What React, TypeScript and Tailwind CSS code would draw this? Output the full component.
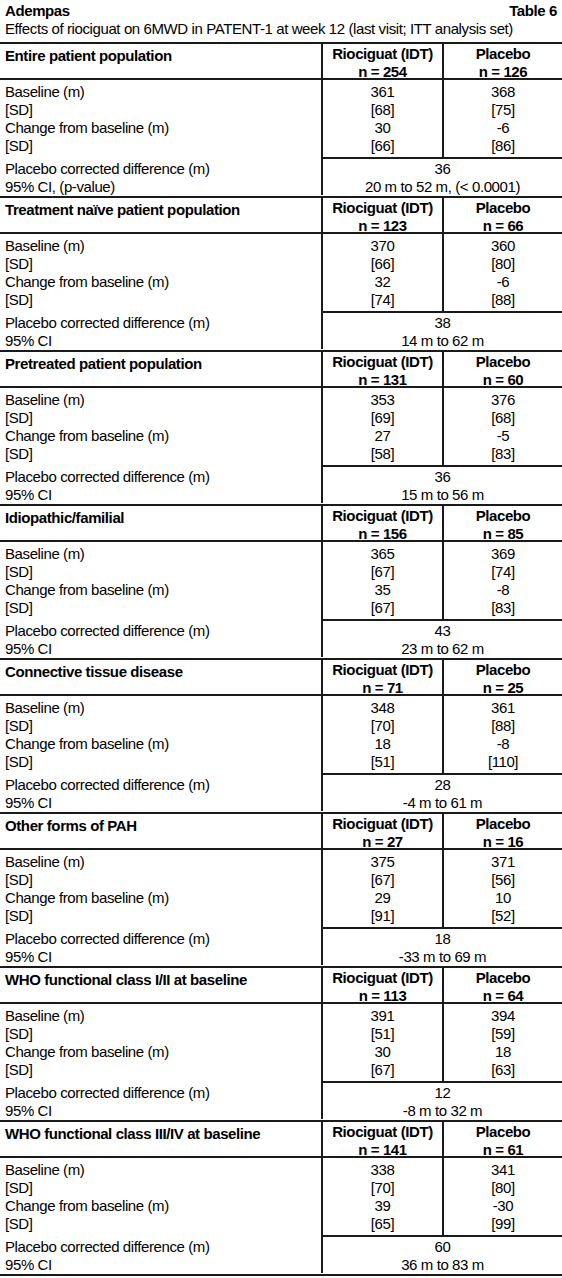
import React from "react";

type Sec = {
  title: string;
  n1: string;
  n2: string;
  b: [string, string, string, string];
  c: [string, string, string, string];
  diff: string;
  ci: string;
  ciLabel: string;
};

const sections: Sec[] = [
  { title: "Entire patient population", n1: "254", n2: "126", b: ["361", "[68]", "368", "[75]"], c: ["30", "[66]", "-6", "[86]"], diff: "36", ci: "20 m to 52 m, (< 0.0001)", ciLabel: "95% CI, (p-value)" },
  { title: "Treatment naïve patient population", n1: "123", n2: "66", b: ["370", "[66]", "360", "[80]"], c: ["32", "[74]", "-6", "[88]"], diff: "38", ci: "14 m to 62 m", ciLabel: "95% CI" },
  { title: "Pretreated patient population", n1: "131", n2: "60", b: ["353", "[69]", "376", "[68]"], c: ["27", "[58]", "-5", "[83]"], diff: "36", ci: "15 m to 56 m", ciLabel: "95% CI" },
  { title: "Idiopathic/familial", n1: "156", n2: "85", b: ["365", "[67]", "369", "[74]"], c: ["35", "[67]", "-8", "[83]"], diff: "43", ci: "23 m to 62 m", ciLabel: "95% CI" },
  { title: "Connective tissue disease", n1: "71", n2: "25", b: ["348", "[70]", "361", "[88]"], c: ["18", "[51]", "-8", "[110]"], diff: "28", ci: "-4 m to 61 m", ciLabel: "95% CI" },
  { title: "Other forms of PAH", n1: "27", n2: "16", b: ["375", "[67]", "371", "[56]"], c: ["29", "[91]", "10", "[52]"], diff: "18", ci: "-33 m to 69 m", ciLabel: "95% CI" },
  { title: "WHO functional class I/II at baseline", n1: "113", n2: "64", b: ["391", "[51]", "394", "[59]"], c: ["30", "[67]", "18", "[63]"], diff: "12", ci: "-8 m to 32 m", ciLabel: "95% CI" },
  { title: "WHO functional class III/IV at baseline", n1: "141", n2: "61", b: ["338", "[70]", "341", "[80]"], c: ["39", "[65]", "-30", "[99]"], diff: "60", ci: "36 m to 83 m", ciLabel: "95% CI" },
];

function Section({ s }: { s: Sec }) {
  return (
    <div className="border-t-2 border-[#1a1a1a]">
      {/* header row */}
      <div className="flex border-b-2 border-[#1a1a1a] h-[36px]">
        <div className="w-[321px] pl-[5px] pt-[3px] font-bold">{s.title}</div>
        <div className="w-[121px] border-l-2 border-[#1a1a1a] text-center font-bold pt-[1px]">
          <div>Riociguat (IDT)</div>
          <div>n = {s.n1}</div>
        </div>
        <div className="flex-1 border-l-2 border-[#1a1a1a] text-center font-bold pt-[1px]">
          <div>Placebo</div>
          <div>n = {s.n2}</div>
        </div>
      </div>
      {/* data row */}
      <div className="flex h-[77px]">
        <div className="w-[321px] pl-[5px] pt-[3px]">
          <div>Baseline (m)</div>
          <div>[SD]</div>
          <div>Change from baseline (m)</div>
          <div>[SD]</div>
        </div>
        <div className="w-[121px] border-l-2 border-[#1a1a1a] text-center pt-[3px]">
          <div>{s.b[0]}</div>
          <div>{s.b[1]}</div>
          <div>{s.c[0]}</div>
          <div>{s.c[1]}</div>
        </div>
        <div className="flex-1 border-l-2 border-[#1a1a1a] text-center pt-[3px]">
          <div>{s.b[2]}</div>
          <div>{s.b[3]}</div>
          <div>{s.c[2]}</div>
          <div>{s.c[3]}</div>
        </div>
      </div>
      {/* placebo corrected row */}
      <div className="flex">
        <div className="w-[321px] pl-[5px] pt-[3px]">
          <div>Placebo corrected difference (m)</div>
          <div>{s.ciLabel}</div>
        </div>
        <div className="flex-1 border-l-2 border-t-2 border-[#1a1a1a] text-center h-[38px] pt-[1px]">
          <div>{s.diff}</div>
          <div>{s.ci}</div>
        </div>
      </div>
    </div>
  );
}

export default function App() {
  return (
    <div
      className="w-[562px] bg-white text-black text-[15px] leading-[18px] tracking-[-0.4px]"
      style={{ fontFamily: '"Liberation Sans Narrow", "Arial Narrow", "Liberation Sans", Arial, sans-serif' }}
    >
      <div className="pt-[2px] pb-[4px]">
        <div className="flex justify-between pl-[5px] pr-[5px] font-bold">
          <span>Adempas</span>
          <span>Table 6</span>
        </div>
        <div className="pl-[5px] whitespace-nowrap">Effects of riociguat on 6MWD in PATENT-1 at week 12 (last visit; ITT analysis set)</div>
      </div>
      {sections.map((s) => (
        <Section key={s.title} s={s} />
      ))}
      <div className="border-t-2 border-[#1a1a1a]" />
    </div>
  );
}
